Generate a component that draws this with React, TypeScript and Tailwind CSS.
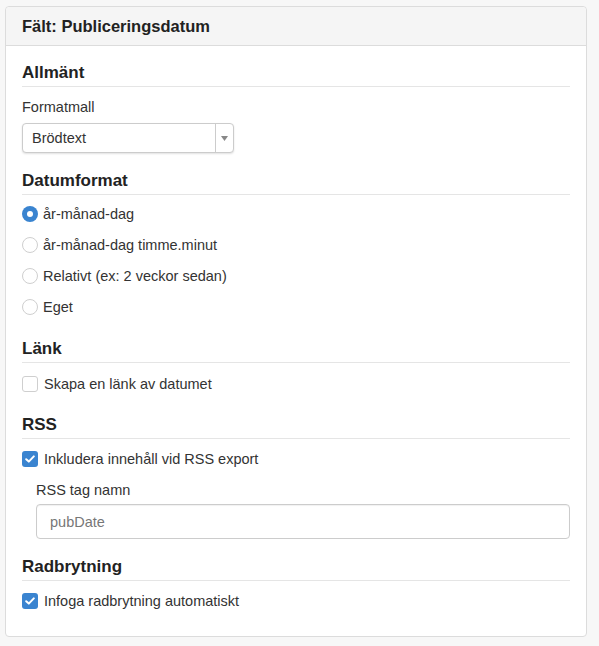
import React from 'react'

const font = { fontFamily: '"Liberation Sans", Arial, sans-serif' }

function Heading({ children, className = '' }: { children: React.ReactNode; className?: string }) {
  return (
    <div className={'border-b border-[#e5e5e5] pb-[3px] ' + className}>
      <h3 className="text-[17px] leading-[20px] font-bold text-[#222]">{children}</h3>
    </div>
  )
}

function Radio({ label, checked = false }: { label: string; checked?: boolean }) {
  return (
    <label className="flex h-[31px] items-center">
      {checked ? (
        <span className="flex h-[16px] w-[16px] items-center justify-center rounded-full bg-[#3a84d0]">
          <span className="h-[6px] w-[6px] rounded-full bg-white" />
        </span>
      ) : (
        <span className="h-[16px] w-[16px] rounded-full border border-[#cfcfcf] bg-white" />
      )}
      <span className="ml-[5px] text-[14.5px] leading-[20px] text-[#333]">{label}</span>
    </label>
  )
}

function Checkbox({ label, checked = false }: { label: string; checked?: boolean }) {
  return (
    <label className="flex h-[31px] items-center">
      {checked ? (
        <span className="flex h-[16px] w-[16px] items-center justify-center rounded-[3px] bg-[#3a84d0]">
          <svg width="10" height="8" viewBox="0 0 10 8">
            <path d="M1.2 4.2 L3.8 6.6 L8.8 1.4" fill="none" stroke="white" strokeWidth="2" strokeLinecap="round" strokeLinejoin="round" />
          </svg>
        </span>
      ) : (
        <span className="h-[16px] w-[16px] rounded-[3px] border border-[#cfcfcf] bg-white" />
      )}
      <span className="ml-[6px] text-[14.5px] leading-[20px] text-[#333]">{label}</span>
    </label>
  )
}

export default function App() {
  return (
    <div className="min-h-[646px] w-[599px] bg-[#f7f7f7] pt-[6px] pl-[5px]" style={font}>
      <div className="w-[582px] rounded-[4px] border border-[#dcdcdc] bg-white">
        {/* header */}
        <div className="rounded-t-[4px] border-b border-[#dcdcdc] bg-[#f5f5f5] px-[16px] pt-[9px] pb-[9px]">
          <h2 className="text-[16.5px] leading-[20px] font-bold text-[#222]">Fält: Publiceringsdatum</h2>
        </div>

        <div className="px-[16px] pt-[17px] pb-[20px]">
          {/* Allmänt */}
          <Heading>Allmänt</Heading>
          <div className="mt-[10px] text-[14.5px] leading-[20px] text-[#333]">Formatmall</div>
          <div className="mt-[6px] flex h-[30px] w-[212px] items-center rounded-[4px] border border-[#cccccc] bg-white shadow-[0_1px_2px_rgba(0,0,0,0.12)]">
            <span className="flex-1 pl-[9px] text-[14.5px] leading-[20px] text-[#333]">Brödtext</span>
            <span className="flex h-full w-[18px] items-center justify-center border-l border-[#cccccc]">
              <svg width="7" height="5" viewBox="0 0 7 5">
                <path d="M0 0 H7 L3.5 5 Z" fill="#888" />
              </svg>
            </span>
          </div>

          {/* Datumformat */}
          <Heading className="mt-[18px]">Datumformat</Heading>
          <div className="mt-[3px]">
            <Radio label="år-månad-dag" checked />
            <Radio label="år-månad-dag timme.minut" />
            <Radio label="Relativt (ex: 2 veckor sedan)" />
            <Radio label="Eget" />
          </div>

          {/* Länk */}
          <Heading className="mt-[17px]">Länk</Heading>
          <div className="mt-[5px]">
            <Checkbox label="Skapa en länk av datumet" />
          </div>

          {/* RSS */}
          <Heading className="mt-[16px]">RSS</Heading>
          <div className="mt-[4px]">
            <Checkbox label="Inkludera innehåll vid RSS export" checked />
          </div>
          <div className="pl-[14px]">
            <div className="mt-[6px] text-[14.5px] leading-[20px] text-[#333]">RSS tag namn</div>
            <div className="mt-[4px] flex h-[35px] items-center rounded-[4px] border border-[#cccccc] bg-white px-[13px] shadow-[inset_0_1px_1px_rgba(0,0,0,0.06)]">
              <span className="text-[14.5px] leading-[20px] text-[#777]">pubDate</span>
            </div>
          </div>

          {/* Radbrytning */}
          <Heading className="mt-[18px]">Radbrytning</Heading>
          <div className="mt-[4px]">
            <Checkbox label="Infoga radbrytning automatiskt" checked />
          </div>
        </div>
      </div>
    </div>
  )
}
